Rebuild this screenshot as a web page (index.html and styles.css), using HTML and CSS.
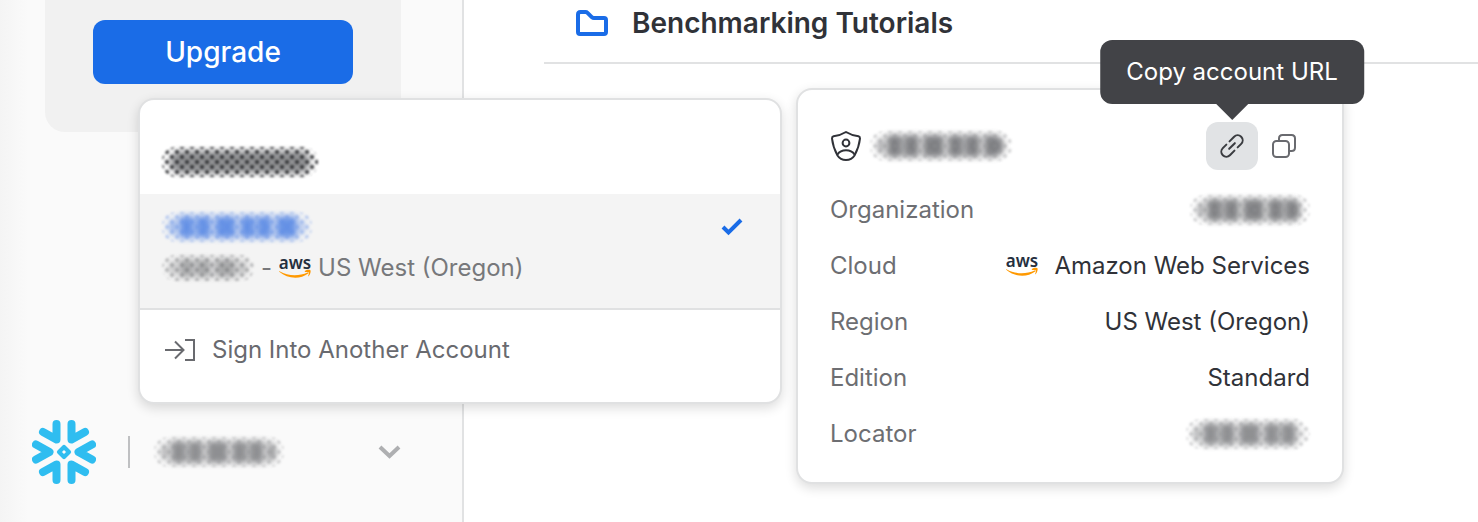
FILE: index.html
```html
<!DOCTYPE html>
<html lang="en">
<head>
<meta charset="utf-8">
<title>Account switcher</title>
<link rel="stylesheet" href="styles.css">
</head>
<body>
<div class="app">
  <aside class="sidebar">
    <section class="trial">
      <button class="upgrade" type="button">Upgrade</button>
    </section>
    <button class="switcher" type="button" aria-label="Switch account" aria-expanded="true">
      <svg class="snowflake" viewBox="0 0 64 64" aria-hidden="true">
        <g fill="none" stroke="#2fbdf0" stroke-width="8" stroke-linecap="round" stroke-linejoin="round">
          <path d="M24.500 4V19.500L11 12"/>
          <path d="M39.500 4V19.500L53 12"/>
          <path d="M24.500 60V44.500L11 52"/>
          <path d="M39.500 60V44.500L53 52"/>
          <path d="M4 24.500L17.500 32 4 39.500"/>
          <path d="M60 24.500L46.500 32 60 39.500"/>
          <path d="M32 27L37 32 32 37 27 32Z" stroke-width="4.200"/>
        </g>
      </svg>
      <span class="divider"></span>
      <span class="redacted redacted-current"></span>
      <svg class="chevron" viewBox="0 0 24 16" aria-hidden="true"><path d="M3 3L12.500 12 22 3" fill="none" stroke="#aeafb1" stroke-width="4"/></svg>
    </button>
  </aside>

  <main class="content">
    <div class="folder-row">
      <svg class="folder" viewBox="0 0 32 26" aria-hidden="true"><path d="M2 4.500Q2 2 4.500 2H9.500Q10.700 2 11.500 2.800L16 7.300Q16.800 8 18 8H28Q30 8 30 10V22Q30 24 28 24H4Q2 24 2 22Z" fill="none" stroke="#1a6ce7" stroke-width="4" stroke-linejoin="round"/></svg>
      <h2 class="folder-name">Benchmarking Tutorials</h2>
    </div>
  </main>

  <div class="popover accounts">
    <button class="account" type="button" aria-label="Account"><span class="redacted redacted-other"></span></button>
    <button class="account account-selected" type="button">
      <span class="account-line">
        <span class="redacted redacted-selected"></span>
        <svg class="check" viewBox="0 0 24 18" aria-hidden="true"><path d="M3 9L8.500 14.500 21 2" fill="none" stroke="#1a6ce7" stroke-width="4"/></svg>
      </span>
      <span class="account-line account-region">
        <span class="redacted redacted-org"></span>
        <span>-</span>
        <svg class="aws" viewBox="0 -5 32 32" role="img" aria-label="AWS">
          <text class="aws-word" x="16" y="12" text-anchor="middle">aws</text>
          <path d="M.5 14.200C9 19.200 20 19.400 28.600 15.400 29.500 15 30 16 29.200 16.600 21 22.800 8.500 22 .2 14.800-.1 14.400.1 14 .5 14.200Z" fill="#f90"/>
          <path d="M25.800 14.100C27.600 12.600 31 12.600 31.500 13.400 32 14.200 31.300 17.500 29.600 19.200 29.300 19.400 29 19.300 29.200 18.800 29.600 17.700 30.200 15.600 29.800 15.200 29.400 14.800 27.300 14.900 26.200 15 25.800 15 25.600 14.500 25.800 14.100Z" fill="#f90"/>
        </svg>
        <span>US West (Oregon)</span>
      </span>
    </button>
    <button class="sign-in" type="button">
      <svg class="sign-icon" viewBox="0 0 32 24" aria-hidden="true"><path d="M1 12H20M11 3.500L19.500 12 11 20.500M21 2H30V22H21" fill="none" stroke="#696a6f" stroke-width="2"/></svg>
      <span>Sign Into Another Account</span>
    </button>
  </div>

  <section class="popover details" aria-label="Account details">
    <header class="details-head">
      <svg class="shield" viewBox="0 0 32 32" aria-hidden="true">
        <g fill="none" stroke="#303238" stroke-width="2" stroke-linejoin="round">
          <path d="M16 2C12.500 4.200 8 5.700 3.500 6.200Q2 6.500 2 8.500C2.600 14 4.500 20 7.500 25.500 9.500 28.700 12.500 30 16 30S22.500 28.700 24.500 25.500C27.500 20 29.400 14 30 8.500Q30 6.500 28.500 6.200C24 5.700 19.500 4.200 16 2Z"/>
          <circle cx="16" cy="13" r="3.400"/>
          <path d="M7.500 24.500C9.300 21.700 12.500 20.300 16 20.300S22.700 21.700 24.500 24.500"/>
        </g>
      </svg>
      <span class="redacted redacted-name"></span>
      <div class="actions">
        <button class="action action-active" type="button" aria-describedby="copy-tip" aria-label="Copy account URL">
          <svg class="action-icon" viewBox="-12 -12 24 24" aria-hidden="true"><g fill="none" stroke="#3a3c40" stroke-width="2" stroke-linecap="round" transform="rotate(-45)"><path d="M1.500 -5H8A5 5 0 0 1 8 5H3"/><path d="M-1.500 5H-8A5 5 0 0 1 -8 -5H-3"/><path d="M-4 0H4"/></g></svg>
          <span class="tooltip" id="copy-tip" role="tooltip">Copy account URL</span>
        </button>
        <button class="action" type="button" aria-label="Copy">
          <svg class="action-icon" viewBox="0 0 24 24" aria-hidden="true"><g fill="none" stroke="#696a6f" stroke-width="2"><rect x="1" y="7" width="16" height="16" rx="3.500"/><path d="M7 7V4.500Q7 1 10.500 1H19.500Q23 1 23 4.500V13.500Q23 17 19.500 17H17"/></g></svg>
        </button>
      </div>
    </header>
    <dl class="facts">
      <div class="fact"><dt>Organization</dt><dd><span class="redacted redacted-organization"></span></dd></div>
      <div class="fact">
        <dt>Cloud</dt>
        <dd>
          <svg class="aws" viewBox="0 -5 32 32" role="img" aria-label="AWS">
            <text class="aws-word" x="16" y="12" text-anchor="middle">aws</text>
            <path d="M.5 14.200C9 19.200 20 19.400 28.600 15.400 29.500 15 30 16 29.200 16.600 21 22.800 8.500 22 .2 14.800-.1 14.400.1 14 .5 14.200Z" fill="#f90"/>
            <path d="M25.800 14.100C27.600 12.600 31 12.600 31.500 13.400 32 14.200 31.300 17.500 29.600 19.200 29.300 19.400 29 19.300 29.200 18.800 29.600 17.700 30.200 15.600 29.800 15.200 29.400 14.800 27.300 14.900 26.200 15 25.800 15 25.600 14.500 25.800 14.100Z" fill="#f90"/>
          </svg>
          <span>Amazon Web Services</span>
        </dd>
      </div>
      <div class="fact"><dt>Region</dt><dd>US West (Oregon)</dd></div>
      <div class="fact"><dt>Edition</dt><dd>Standard</dd></div>
      <div class="fact"><dt>Locator</dt><dd><span class="redacted redacted-locator"></span></dd></div>
    </dl>
  </section>
</div>
</body>
</html>
```
FILE: styles.css
```css
* { box-sizing: border-box; }

body {
  margin: 0;
  background: #fff;
  color: #303238;
  font: 24px/32px Inter, "Liberation Sans", sans-serif;
}

button {
  margin: 0;
  padding: 0;
  border: 0;
  background: none;
  color: inherit;
  font: inherit;
  text-align: left;
}

svg { display: block; flex: none; }

.app {
  position: relative;
  display: flex;
  min-height: 100vh;
  overflow: hidden;
}

/* Sidebar */
.sidebar {
  display: flex;
  flex-direction: column;
  justify-content: space-between;
  flex: none;
  width: 464px;
  padding: 0 61px 38px 32px;
  border-right: 2px solid #e1e2e3;
  background: linear-gradient(90deg, #f4f4f4, #fafafa 28px);
}

.trial {
  margin-left: 13px;
  padding: 20px 48px 48px;
  border-radius: 0 0 20px 20px;
  background: #f1f1f1;
}

.upgrade {
  display: block;
  width: 100%;
  height: 64px;
  border-radius: 12px;
  background: #1a6ce7;
  color: #fff;
  font-size: 28px;
  font-weight: 500;
  text-align: center;
}

.switcher { display: flex; align-items: center; }
.snowflake { width: 64px; height: 64px; }
.divider { width: 2px; height: 32px; margin: 0 24px 0 32px; background: #bfc0c2; }
.chevron { width: 24px; height: 16px; margin-left: auto; }

/* Main column */
.content { flex: 1; min-width: 0; padding-left: 80px; }

.folder-row {
  display: flex;
  align-items: center;
  gap: 24px;
  padding: 0 32px 16px;
  border-bottom: 2px solid #e1e2e3;
}

.folder { width: 32px; height: 26px; }
.folder-name { margin: 0; font-size: 28px; line-height: 46px; font-weight: 600; }

/* Floating panels */
.popover {
  position: absolute;
  border: 2px solid #e0e1e2;
  border-radius: 16px;
  background: #fff;
  box-shadow: 0 4px 12px rgba(0, 0, 0, .14);
}

.accounts { top: 98px; left: 138px; width: 644px; overflow: hidden; }
.details { top: 88px; left: 796px; width: 548px; padding: 32px 32px 20px; }

.account { display: block; width: 100%; padding: 46px 22px 16px; }

.account-selected {
  padding: 16px 32px 20px 22px;
  border-bottom: 2px solid #e0e1e2;
  background: #f4f4f4;
}

.account-line { display: flex; align-items: center; justify-content: space-between; height: 34px; }
.account-region { justify-content: flex-start; gap: 7px; height: 44px; padding-top: 4px; color: #77787b; }
.check { width: 24px; height: 18px; margin-right: 4px; }

.aws { width: 32px; height: 32px; }
.aws-word { fill: #252f3e; font: 600 17px "Noto Sans", "Open Sans", sans-serif; }

.sign-in {
  display: flex;
  align-items: center;
  gap: 16px;
  width: 100%;
  padding: 24px 24px 36px;
  color: #696a6f;
}
.sign-icon { width: 32px; height: 24px; }

/* Details panel */
.details-head { display: flex; align-items: center; margin-bottom: 12px; }
.shield { width: 32px; height: 32px; }
.actions { display: flex; margin-left: auto; }

.action {
  position: relative;
  display: flex;
  align-items: center;
  justify-content: center;
  width: 52px;
  height: 48px;
  border-radius: 12px;
}
.action-active { background: #e1e3e5; }
.action-icon { width: 24px; height: 24px; }

.tooltip {
  position: absolute;
  bottom: 66px;
  left: 50%;
  padding: 16px 26px;
  border-radius: 12px;
  background: #424347;
  color: #fff;
  white-space: nowrap;
  transform: translateX(-50%);
}
.tooltip::after {
  content: "";
  position: absolute;
  top: 100%;
  left: 50%;
  border: 16px solid transparent;
  border-top-color: #424347;
  border-bottom-width: 0;
  transform: translateX(-50%);
}

.facts { margin: 0; }
.fact { display: flex; align-items: center; justify-content: space-between; height: 56px; }
.fact dt { color: #6d6e72; }
.fact dd { display: flex; align-items: center; gap: 16px; margin: 0; }

/* Obscured values: a soft smear under a halftone edge */
.redacted {
  --ink: #7c7d80;
  --dots: #909194;
  position: relative;
  display: block;
  flex: none;
  height: 32px;
}
.redacted::before,
.redacted::after { content: ""; position: absolute; border-radius: 14px; }
.redacted::before {
  inset: 5px 8px;
  background: repeating-linear-gradient(90deg, var(--ink) 0 5px, transparent 5px 9px, var(--ink) 9px 24px, transparent 24px 26px, var(--ink) 26px 41px, transparent 41px 45px, var(--ink) 45px 61px);
  filter: blur(3px);
  opacity: .85;
}
.redacted::after {
  inset: 1px 0;
  background:
    radial-gradient(circle, var(--dots) 1px, transparent 3px) 0 0 / 10px 10px,
    radial-gradient(circle, var(--dots) 1px, transparent 3px) 5px 5px / 10px 10px;
  filter: blur(1px);
  opacity: .4;
}
.redacted-current { width: 130px; }
.redacted-other { --dots: #252629; width: 156px; }
.redacted-other::before { background: var(--ink); }
.redacted-other::after { opacity: .9; }
.redacted-selected { --ink: #4f82e3; --dots: #5d8deb; width: 150px; }
.redacted-org { --ink: #9b9c9e; --dots: #626366; width: 92px; height: 28px; }
.redacted-name { --ink: #696a6e; width: 142px; margin-left: 8px; }
.redacted-organization { --ink: #6c6d70; width: 120px; }
.redacted-locator { width: 124px; }
```
